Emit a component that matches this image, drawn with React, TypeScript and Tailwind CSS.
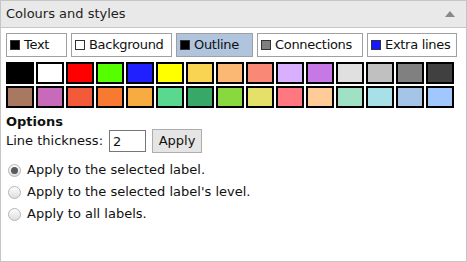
import { useState } from 'react';

const rowOne = ['#000000', '#ffffff', '#ff0000', '#55ff00', '#2020ff', '#ffff00', '#f8d452', '#fbb874', '#fa8877', '#d8b0ff', '#c678e6', '#e0e0e0', '#c0c0c0', '#808080', '#404040'];
const rowTwo = ['#a87860', '#c86abc', '#f35a3a', '#f77a30', '#f8ab40', '#5ad890', '#38a868', '#88d840', '#e4e06a', '#ff7880', '#ffcc98', '#a0e0c4', '#a8e0e8', '#a4c4e8', '#a0c8ff'];

const targets = [
  { label: 'Text', swatch: 'bg-black', width: 'w-[61px]' },
  { label: 'Background', swatch: 'bg-white', width: 'w-[101px]' },
  { label: 'Outline', swatch: 'bg-black', width: 'w-[77px]' },
  { label: 'Connections', swatch: 'bg-[#808080]', width: 'w-[106px]' },
  { label: 'Extra lines', swatch: 'bg-[#1515ff]', width: 'w-[90px]' },
];

const scopes = ['Apply to the selected label.', "Apply to the selected label's level.", 'Apply to all labels.'];

function Radio({ checked }: { checked: boolean }) {
  return (
    <span className="w-[13px] h-[13px] rounded-full border border-[#b5b5b5] bg-gradient-to-b from-[#fdfdfd] to-[#dedede] flex items-center justify-center shrink-0">
      {checked && <span className="w-[7px] h-[7px] rounded-full bg-[#5a5a5a]" />}
    </span>
  );
}

export default function App() {
  const [target, setTarget] = useState('Outline');
  const [scope, setScope] = useState(0);

  return (
    <div className="w-[467px] h-[262px] bg-white border border-[#c5c5c5] text-[13px] text-[#111] flex flex-col" style={{ fontFamily: '"DejaVu Sans", Verdana, sans-serif' }}>
      <div className="h-[27px] bg-[#e9e9e9] border-b border-[#c5c5c5] flex items-center justify-between pl-[5px] pr-[11px] shrink-0">
        <span className="text-[#222]">Colours and styles</span>
        <span className="w-0 h-0 border-l-[5px] border-r-[5px] border-b-[6px] border-l-transparent border-r-transparent border-b-[#888]" />
      </div>

      <div className="pl-[5px] pt-[5px] flex flex-col">
        <div className="flex gap-[4px]">
          {targets.map((t) => (
            <button
              key={t.label}
              onClick={() => setTarget(t.label)}
              className={`${t.width} h-[24px] border border-[#a0a0a0] flex items-center gap-[4px] pl-[3px] whitespace-nowrap ${target === t.label ? 'bg-[#b0c4de]' : 'bg-white'}`}
            >
              <span className={`w-[10px] h-[10px] border border-[#333] shrink-0 ${t.swatch}`} />
              <span className="tracking-[-0.3px]">{t.label}</span>
            </button>
          ))}
        </div>

        <div className="mt-[5px] flex flex-col gap-[2px]">
          {[rowOne, rowTwo].map((row, i) => (
            <div key={i} className="flex gap-[2px]">
              {row.map((c) => (
                <span key={c} className="w-[28px] h-[22px] border-2 border-black" style={{ backgroundColor: c }} />
              ))}
            </div>
          ))}
        </div>

        <div className="mt-[6px] font-bold leading-[15px]">Options</div>

        <div className="flex items-center">
          <span>Line thickness:</span>
          <input defaultValue="2" className="ml-[6px] w-[37px] h-[22px] border border-[#767676] px-[3px] outline-none" />
          <button className="ml-[6px] w-[50px] h-[24px] bg-[#e5e5e5] border border-[#adadad] text-[#111]">Apply</button>
        </div>

        <div className="mt-[6px] flex flex-col">
          {scopes.map((s, i) => (
            <label key={s} onClick={() => setScope(i)} className="h-[22px] flex items-center gap-[6px] pl-[2px] cursor-pointer">
              <Radio checked={scope === i} />
              <span>{s}</span>
            </label>
          ))}
        </div>
      </div>
    </div>
  );
}
